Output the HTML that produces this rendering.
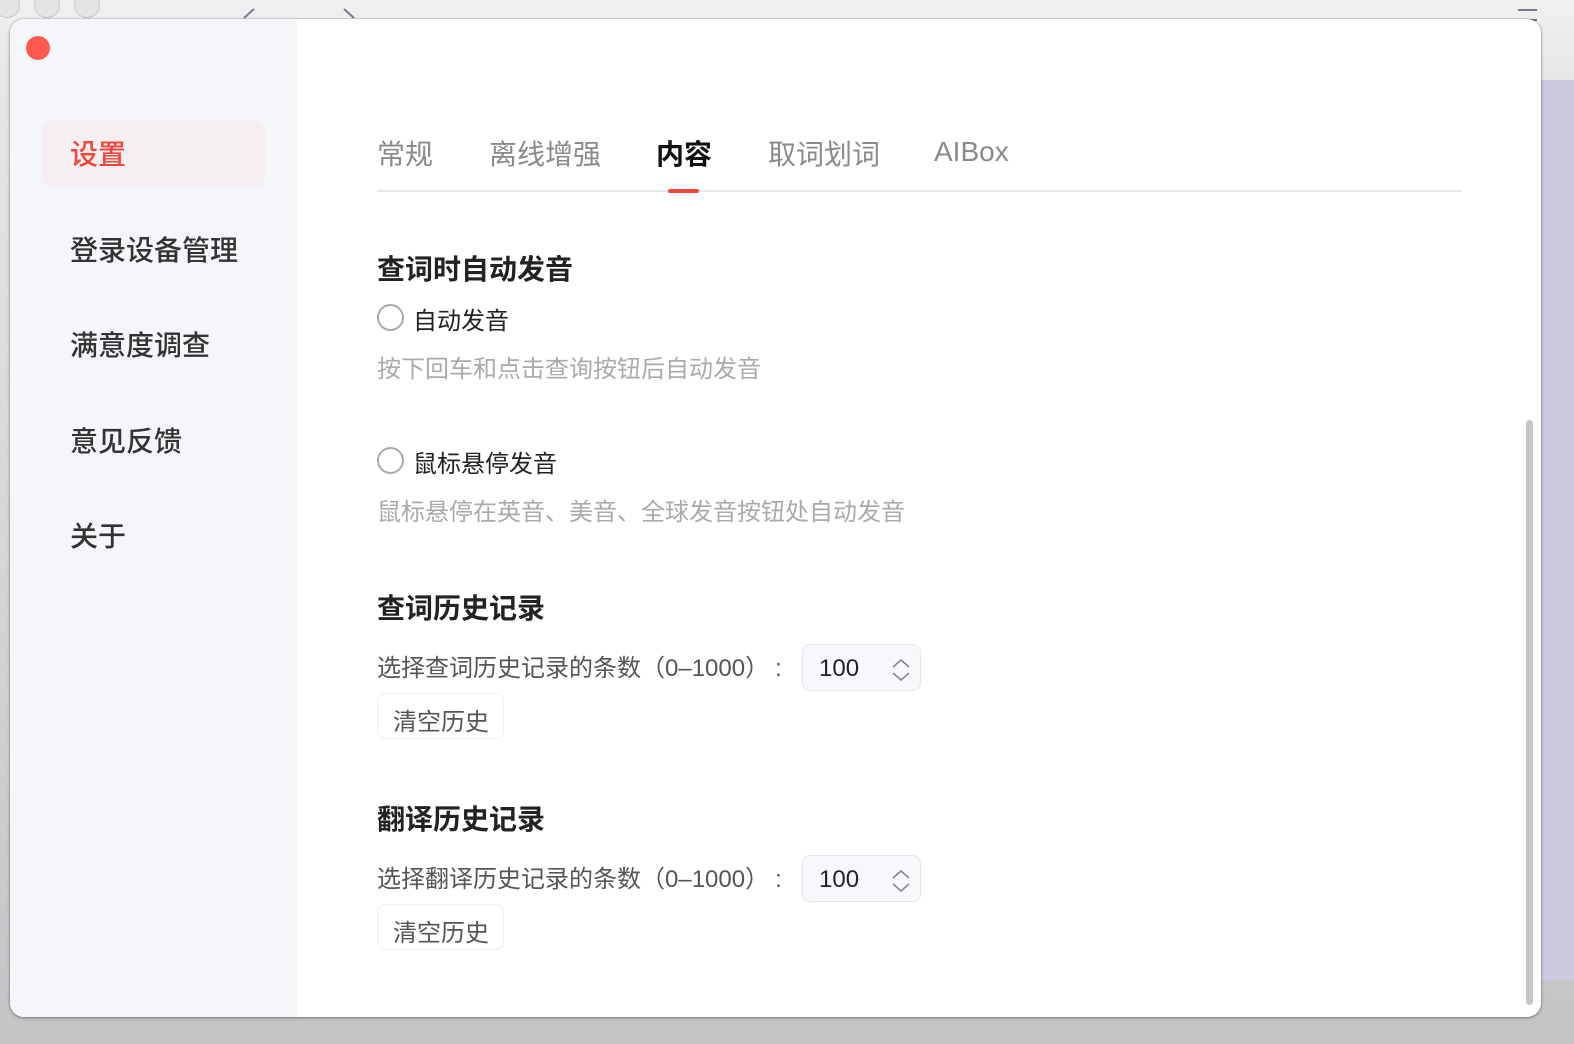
<!DOCTYPE html>
<html><head><meta charset="utf-8"><style>
*{margin:0;padding:0;box-sizing:border-box}
body{width:1574px;height:1044px;overflow:hidden;position:relative;background:linear-gradient(#f0f0f0,#e6e6e6 80px,#c4c4c6);font-family:"Liberation Sans","Noto Sans CJK SC",sans-serif}
.a{position:absolute;white-space:nowrap}
.rightbg{position:absolute;left:1540px;top:80px;width:34px;height:900px;background:#cdc8df}
.win{position:absolute;left:10px;top:19px;width:1531px;height:998px;background:#fff;border-radius:14px;overflow:hidden;box-shadow:0 1px 3px rgba(0,0,0,.35),0 0 0 1px rgba(0,0,0,.08)}
.side{position:absolute;left:0;top:0;width:287px;height:100%;background:#f5f6fa}
.tl{position:absolute;border-radius:50%;width:26px;height:26px;background:#e4e4e4;border:1px solid #c8c8c8;top:-8px}
.si{font-size:28px;font-weight:500;color:#333;left:60px}
.tab{font-size:28px;color:#8a8a8a;top:114px}
.h{font-size:28px;font-weight:bold;color:#222;left:367px}
.rad{position:absolute;left:367px;width:27px;height:27px;border:2px solid #aaa;border-radius:50%}
.lbl{font-size:24px;color:#222;left:403px}
.desc{font-size:24px;color:#aaa;left:367px}
.txt{font-size:24px;color:#555;left:367px}
.num{position:absolute;left:792px;width:119px;height:47px;border:1.5px solid #e4e6ea;border-radius:8px;background:#f7f8fb;font-size:24px;color:#222;padding:10px 0 0 16px}
.btn{position:absolute;left:367px;width:127px;height:46px;border:1.5px solid #eceef0;border-radius:8px;font-size:24px;color:#555;padding:8px 0 0 15px}
</style></head><body>
<div class="rightbg"></div>
<div class="tl" style="left:-6px"></div><div class="tl" style="left:34px"></div><div class="tl" style="left:74px"></div>
<svg class="a" style="left:240px;top:6px" width="120" height="14"><path d="M4 12 L14 3" stroke="#777a90" stroke-width="2"/><path d="M104 3 L114 12" stroke="#777a90" stroke-width="2"/></svg>
<svg class="a" style="left:1518px;top:8px" width="20" height="14"><path d="M0 2H19M0 12H19" stroke="#777a90" stroke-width="2"/></svg>
<div class="win">
 <div class="side">
  <div class="a" style="left:16px;top:17px;width:24px;height:24px;border-radius:50%;background:#fe5a50"></div>
  <div class="a" style="left:32px;top:101px;width:223px;height:67px;border-radius:10px;background:#f6eff2"></div>
  <div class="a si" style="top:114px;color:#f4453b">设置</div>
  <div class="a si" style="top:210px">登录设备管理</div>
  <div class="a si" style="top:305px">满意度调查</div>
  <div class="a si" style="top:401px">意见反馈</div>
  <div class="a si" style="top:496px">关于</div>
 </div>
 <div class="a tab" style="left:367px">常规</div>
 <div class="a tab" style="left:479px">离线增强</div>
 <div class="a tab" style="left:646px;color:#111;font-weight:bold">内容</div>
 <div class="a tab" style="left:758px">取词划词</div>
 <div class="a tab" style="left:924px;top:117px">AIBox</div>
 <div class="a" style="left:367px;top:171px;width:1084px;height:2px;background:#e8e8e8"></div>
 <div class="a" style="left:658px;top:170px;width:31px;height:4px;border-radius:2px;background:#f4453b"></div>

 <div class="a h" style="top:229px">查词时自动发音</div>
 <div class="rad" style="top:285px"></div>
 <div class="a lbl" style="top:282px">自动发音</div>
 <div class="a desc" style="top:330px">按下回车和点击查询按钮后自动发音</div>
 <div class="rad" style="top:428px"></div>
 <div class="a lbl" style="top:425px">鼠标悬停发音</div>
 <div class="a desc" style="top:473px">鼠标悬停在英音、美音、全球发音按钮处自动发音</div>

 <div class="a h" style="top:568px">查词历史记录</div>
 <div class="a txt" style="top:629px">选择查词历史记录的条数（0–1000）<span style="margin-left:6px">:</span></div>
 <div class="num" style="top:625px">100<svg class="a" style="left:88px;top:13px" width="20" height="24"><path d="M2 9L10 2L18 9M2 15L10 22L18 15" fill="none" stroke="#888" stroke-width="1.6"/></svg></div>
 <div class="btn" style="top:674px">清空历史</div>

 <div class="a h" style="top:779px">翻译历史记录</div>
 <div class="a txt" style="top:840px">选择翻译历史记录的条数（0–1000）<span style="margin-left:6px">:</span></div>
 <div class="num" style="top:836px">100<svg class="a" style="left:88px;top:13px" width="20" height="24"><path d="M2 9L10 2L18 9M2 15L10 22L18 15" fill="none" stroke="#888" stroke-width="1.6"/></svg></div>
 <div class="btn" style="top:885px">清空历史</div>

 <div class="a" style="left:1516px;top:401px;width:7px;height:585px;border-radius:4px;background:#c6c6ca"></div>
</div>
</body></html>
